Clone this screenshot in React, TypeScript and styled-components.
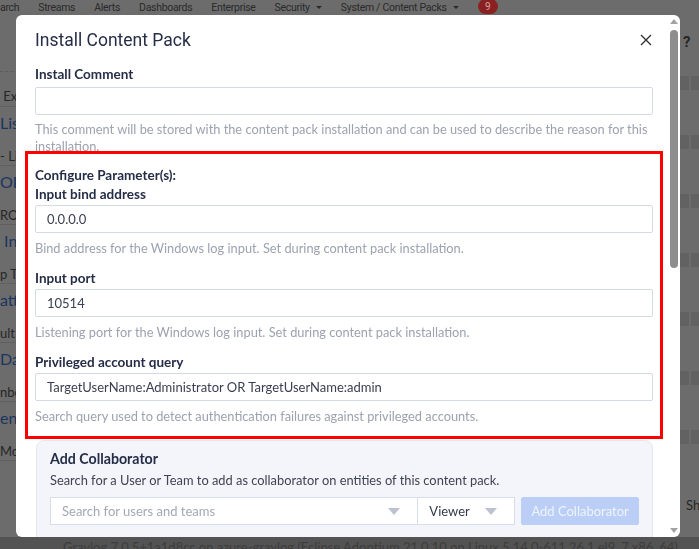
import styled, { createGlobalStyle } from "styled-components";

const SANS = `"Lato", "Open Sans", "Noto Sans", sans-serif`;
const HEAD = `"Roboto", "Lato", sans-serif`;

const GlobalStyle = createGlobalStyle`
  html, body {
    margin: 0;
    padding: 0;
    width: 699px;
    height: 549px;
    overflow: hidden;
  }
  body {
    font-family: ${SANS};
    background: #6c6c6c;
  }
  * { box-sizing: border-box; }
`;

/* ---------- dimmed page behind the modal ---------- */

const Page = styled.div`
  width: 699px;
  height: 549px;
  display: flex;
  flex-direction: column;
  overflow: hidden;
`;

const Nav = styled.nav`
  height: 15px;
  display: flex;
  align-items: center;
  gap: 19px;
  font-family: ${HEAD};
  font-size: 10.5px;
  letter-spacing: -0.3px;
  color: #2a2a2a;
  white-space: nowrap;
`;

const NavItem = styled.span`
  display: inline-flex;
  align-items: center;
  gap: 6px;
`;

const NavCaret = styled.span`
  width: 0;
  height: 0;
  border-left: 3px solid transparent;
  border-right: 3px solid transparent;
  border-top: 3px solid #2a2a2a;
`;

const Badge = styled.span`
  width: 20px;
  height: 15px;
  margin-top: -2px;
  border-radius: 8px;
  background: #8a2121;
  color: #d9a0a0;
  font-size: 10px;
  display: flex;
  align-items: center;
  justify-content: center;
`;

const Main = styled.div`
  flex: 1;
  display: flex;
  justify-content: space-between;
  overflow: hidden;
`;

const SideList = styled.div`
  width: 40px;
  display: flex;
  flex-direction: column;
  white-space: nowrap;
  overflow: hidden;
`;

const Dashed = styled.div`
  margin-top: 56px;
  border-top: 1px dashed #5c5c5c;
`;

const ListRow = styled.div<{ $short?: boolean }>`
  height: ${(p) => (p.$short ? 35 : 59)}px;
  border-bottom: 1px solid #606060;
  display: flex;
  flex-direction: column;
  padding-top: ${(p) => (p.$short ? 14 : 6)}px;
`;

const RowTitle = styled.div`
  height: 20px;
  line-height: 20px;
  font-size: 16px;
  color: #1b355f;
`;

const RowDesc = styled.div<{ $first?: boolean }>`
  margin-top: ${(p) => (p.$first ? 0 : 13)}px;
  height: 20px;
  line-height: 20px;
  font-size: 13px;
  color: #262626;
`;

const RightCol = styled.div`
  width: 19px;
  display: flex;
  flex-direction: column;
  align-items: flex-start;
`;

const Help = styled.div`
  margin-top: 19px;
  font-family: ${HEAD};
  font-size: 15px;
  font-weight: 700;
  color: #262626;
  line-height: 16px;
  padding-left: 3px;
`;

const Blocks = styled.div<{ $first?: boolean }>`
  margin-top: ${(p) => (p.$first ? 26 : 45)}px;
  display: flex;
  gap: 2px;
  height: 14px;
`;

const Block = styled.span`
  width: 9px;
  background: #626262;
`;

const ShText = styled.div`
  margin-top: auto;
  margin-bottom: 24px;
  font-size: 13px;
  color: #262626;
  padding-left: 6px;
`;

const Footer = styled.footer`
  height: 12px;
  background: #535353;
  color: #3c3c3c;
  font-size: 13px;
  line-height: 20px;
  padding-left: 63px;
  white-space: nowrap;
  overflow: hidden;
`;

/* ---------- modal ---------- */

const Backdrop = styled.div`
  position: fixed;
  inset: 0;
`;

const Modal = styled.div`
  position: absolute;
  left: 16px;
  top: 15px;
  width: 664px;
  height: 522px;
  background: #fff;
  border-radius: 6px;
  overflow: hidden;
  display: flex;
  flex-direction: column;
`;

const Header = styled.div`
  display: flex;
  align-items: center;
  justify-content: space-between;
  padding: 14px 27px 0 19px;
`;

const Title = styled.h4`
  margin: 0;
  font-family: ${HEAD};
  font-weight: 400;
  font-size: 17.5px;
  line-height: 22px;
  color: #252d47;
`;

const Close = styled.button`
  border: 0;
  background: none;
  padding: 0;
  width: 14px;
  height: 14px;
  display: flex;
  color: #333;
`;

const Body = styled.div`
  padding: 15px 27px 0 19px;
  display: flex;
  flex-direction: column;
`;

const Group = styled.div<{ $last?: boolean }>`
  display: flex;
  flex-direction: column;
  margin-bottom: ${(p) => (p.$last ? 0 : 13)}px;
`;

const Label = styled.label`
  font-size: 13.5px;
  font-weight: 700;
  line-height: 17px;
  color: #252d47;
`;

const Heading = styled(Label)`
  display: block;
  margin-bottom: 2px;
`;

const Input = styled.div<{ $gap?: number }>`
  margin-top: ${(p) => p.$gap ?? 2}px;
  height: 28px;
  border: 1px solid #d4d9e5;
  border-radius: 2px;
  padding: 0 11px;
  display: flex;
  align-items: center;
  font-size: 13px;
  color: #3a4052;
`;

const HelpText = styled.div<{ $gap?: number }>`
  margin-top: ${(p) => p.$gap ?? 7}px;
  font-size: 12.8px;
  line-height: 17px;
  color: #9da2b0;
`;

const Marked = styled.section`
  margin: -4px -10px 0;
  border: 3px solid #ff0000;
  padding: 13px 7px 11px;
  position: relative;
`;

const Panel = styled.section`
  margin: 1px 0 0 1px;
  background: #f4f5fa;
  border: 1px solid #e4e7f0;
  border-radius: 8px;
  padding: 9px 13px 20px;
`;

const PanelTitle = styled.h5`
  margin: 0;
  font-size: 14.2px;
  line-height: 18px;
  font-weight: 700;
  color: #252d47;
`;

const PanelText = styled.p`
  margin: 4px 0 0;
  font-size: 12.85px;
  line-height: 17px;
  color: #3f4452;
`;

const PickRow = styled.div`
  margin-top: 8px;
  display: flex;
  height: 28px;
`;

const Select = styled.div<{ $w: number; $placeholder?: boolean; $first?: boolean }>`
  width: ${(p) => p.$w}px;
  height: 28px;
  background: #fff;
  border: 1px solid #d9dde8;
  margin-left: ${(p) => (p.$first ? 0 : -1)}px;
  display: flex;
  align-items: center;
  justify-content: space-between;
  padding: 0 17px 0 11px;
  font-size: 13px;
  color: ${(p) => (p.$placeholder ? "#a3a8b5" : "#333a4a")};
`;

const Caret = styled.span`
  width: 0;
  height: 0;
  border-left: 6px solid transparent;
  border-right: 6px solid transparent;
  border-top: 7px solid #bcc2cf;
`;

const AddButton = styled.button`
  margin-left: 6px;
  width: 118px;
  height: 28px;
  border: 0;
  border-radius: 2px;
  background: #bbcff6;
  color: #eef3fd;
  font-family: ${SANS};
  font-size: 13px;
  padding: 0;
`;

const Scrollbar = styled.div`
  position: absolute;
  right: 0;
  top: 0;
  bottom: 0;
  width: 12px;
  display: flex;
  flex-direction: column;
  align-items: center;
  padding: 4px 0;
`;

const Arrow = styled.span<{ $down?: boolean }>`
  width: 0;
  height: 0;
  border-left: 4px solid transparent;
  border-right: 4px solid transparent;
  ${(p) =>
    p.$down
      ? "border-top: 5px solid #a3a3a3; margin-top: auto;"
      : "border-bottom: 5px solid #a3a3a3;"}
`;

const Thumb = styled.span`
  margin-top: 6px;
  width: 8px;
  height: 238px;
  border-radius: 4px;
  background: #8e8e8e;
`;

const listRows = [
  { title: "List", desc: "- List" },
  { title: "OP", desc: "ROP" },
  { title: "\u00a0Int", desc: "p Ta" },
  { title: "atte", desc: "ult G" },
  { title: "Das", desc: "nboa" },
  { title: "ent", desc: "Mon" },
];

const fields = [
  {
    label: "Input bind address",
    value: "0.0.0.0",
    help: "Bind address for the Windows log input. Set during content pack installation.",
  },
  {
    label: "Input port",
    value: "10514",
    help: "Listening port for the Windows log input. Set during content pack installation.",
  },
  {
    label: "Privileged account query",
    value: "TargetUserName:Administrator OR TargetUserName:admin",
    help: "Search query used to detect authentication failures against privileged accounts.",
  },
];

function BackgroundPage() {
  return (
    <Page>
      <Nav>
        <NavItem>arch</NavItem>
        <NavItem>Streams</NavItem>
        <NavItem>Alerts</NavItem>
        <NavItem>Dashboards</NavItem>
        <NavItem>Enterprise</NavItem>
        <NavItem>
          Security <NavCaret />
        </NavItem>
        <NavItem>
          System / Content Packs <NavCaret />
        </NavItem>
        <Badge>9</Badge>
      </Nav>
      <Main>
        <SideList>
          <Dashed />
          <ListRow $short>
            <RowDesc $first>&nbsp;Exc</RowDesc>
          </ListRow>
          {listRows.map((row) => (
            <ListRow key={row.title}>
              <RowTitle>{row.title}</RowTitle>
              <RowDesc>{row.desc}</RowDesc>
            </ListRow>
          ))}
        </SideList>
        <RightCol>
          <Help>?</Help>
          {[0, 1, 2, 3, 4, 5, 6].map((i) => (
            <Blocks key={i} $first={i === 0}>
              <Block />
              <Block />
            </Blocks>
          ))}
          <ShText>Sh</ShText>
        </RightCol>
      </Main>
      <Footer>
        Graylog 7.0.5+1a1d8cc on azure-graylog (Eclipse Adoptium 21.0.10 on Linux
        5.14.0-611.26.1.el9_7.x86_64)
      </Footer>
    </Page>
  );
}

export default function App() {
  return (
    <>
      <GlobalStyle />
      <BackgroundPage />
      <Backdrop>
        <Modal>
          <Header>
            <Title>Install Content Pack</Title>
            <Close aria-label="Close">
              <svg width="14" height="14" viewBox="0 0 14 14">
                <path d="M2 2 L12 12 M12 2 L2 12" stroke="#333" strokeWidth="1.4" />
              </svg>
            </Close>
          </Header>
          <Body>
            <Group $last>
              <Label>Install Comment</Label>
              <Input $gap={4} />
              <HelpText $gap={6}>
                This comment will be stored with the content pack installation and can be used to
                describe the reason for this installation.
              </HelpText>
            </Group>
            <Marked>
              <Heading>Configure Parameter(s):</Heading>
              {fields.map((f, i) => (
                <Group key={f.label} $last={i === fields.length - 1}>
                  <Label>{f.label}</Label>
                  <Input>{f.value}</Input>
                  <HelpText>{f.help}</HelpText>
                </Group>
              ))}
            </Marked>
            <Panel>
              <PanelTitle>Add Collaborator</PanelTitle>
              <PanelText>
                Search for a User or Team to add as collaborator on entities of this content pack.
              </PanelText>
              <PickRow>
                <Select $w={369} $placeholder $first>
                  Search for users and teams
                  <Caret />
                </Select>
                <Select $w={98}>
                  Viewer
                  <Caret />
                </Select>
                <AddButton disabled>Add Collaborator</AddButton>
              </PickRow>
            </Panel>
          </Body>
          <Scrollbar>
            <Arrow />
            <Thumb />
            <Arrow $down />
          </Scrollbar>
        </Modal>
      </Backdrop>
    </>
  );
}
